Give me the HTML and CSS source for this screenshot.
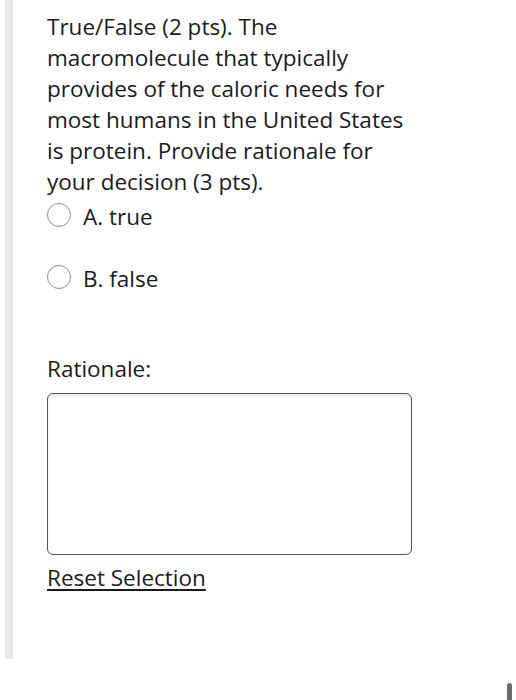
FILE: index.html
```html
<html>
<head>
	<title>Question 4</title>
	<link rel="stylesheet" href="styles.css">
</head>
<body>

<div class="question">
	<div class="stem">
		True/False (2 pts). The macromolecule that typically provides of the caloric needs for most humans in the United States is protein. Provide rationale for your decision (3 pts).
	</div>

	<label class="choice choiceFirst"><span class="radio"></span>A. true</label>
	<label class="choice"><span class="radio"></span>B. false</label>

	<div class="label">Rationale:</div>
	<div class="answer"></div>

	<a href="#" class="reset">Reset Selection</a>
</div>

<div class="scrollMark"></div>

</body>
</html>
```

FILE: styles.css
```css
body {
	margin: 0;
	font-family: "Open Sans", "Liberation Sans", sans-serif;
	font-size: 22.5px;
	line-height: 31px;
	color: #1b1b1b;
	background: #ffffff;
}
.question {
	margin-left: 5px;
	width: 400px;
	border-left: 8px solid #e8e8e8;
	padding: 11px 0 66px 34px;
}
.stem {
	width: 362px;
}
.choice {
	display: flex;
	align-items: center;
	gap: 12px;
	margin-top: 31px;
}
.choiceFirst {
	margin-top: 4px;
}
.radio {
	display: inline-block;
	width: 22px;
	height: 22px;
	border: 1.5px solid #8e8e8e;
	border-radius: 50%;
	margin-top: -4px;
}
.label {
	margin-top: 59px;
}
.answer {
	box-sizing: border-box;
	margin-top: 9px;
	width: 365px;
	height: 162px;
	border: 1.5px solid #555555;
	border-radius: 6px;
	box-shadow: inset 0 2px 2px rgba(0,0,0,0.08);
}
.reset {
	display: block;
	margin-top: 7px;
	color: #1b1b1b;
	text-decoration: underline;
	text-underline-offset: 3px;
}
.scrollMark {
	position: absolute;
	left: 507px;
	top: 683px;
	width: 5px;
	height: 20px;
	border-radius: 3px;
	background: #6a6a6a;
}
```
